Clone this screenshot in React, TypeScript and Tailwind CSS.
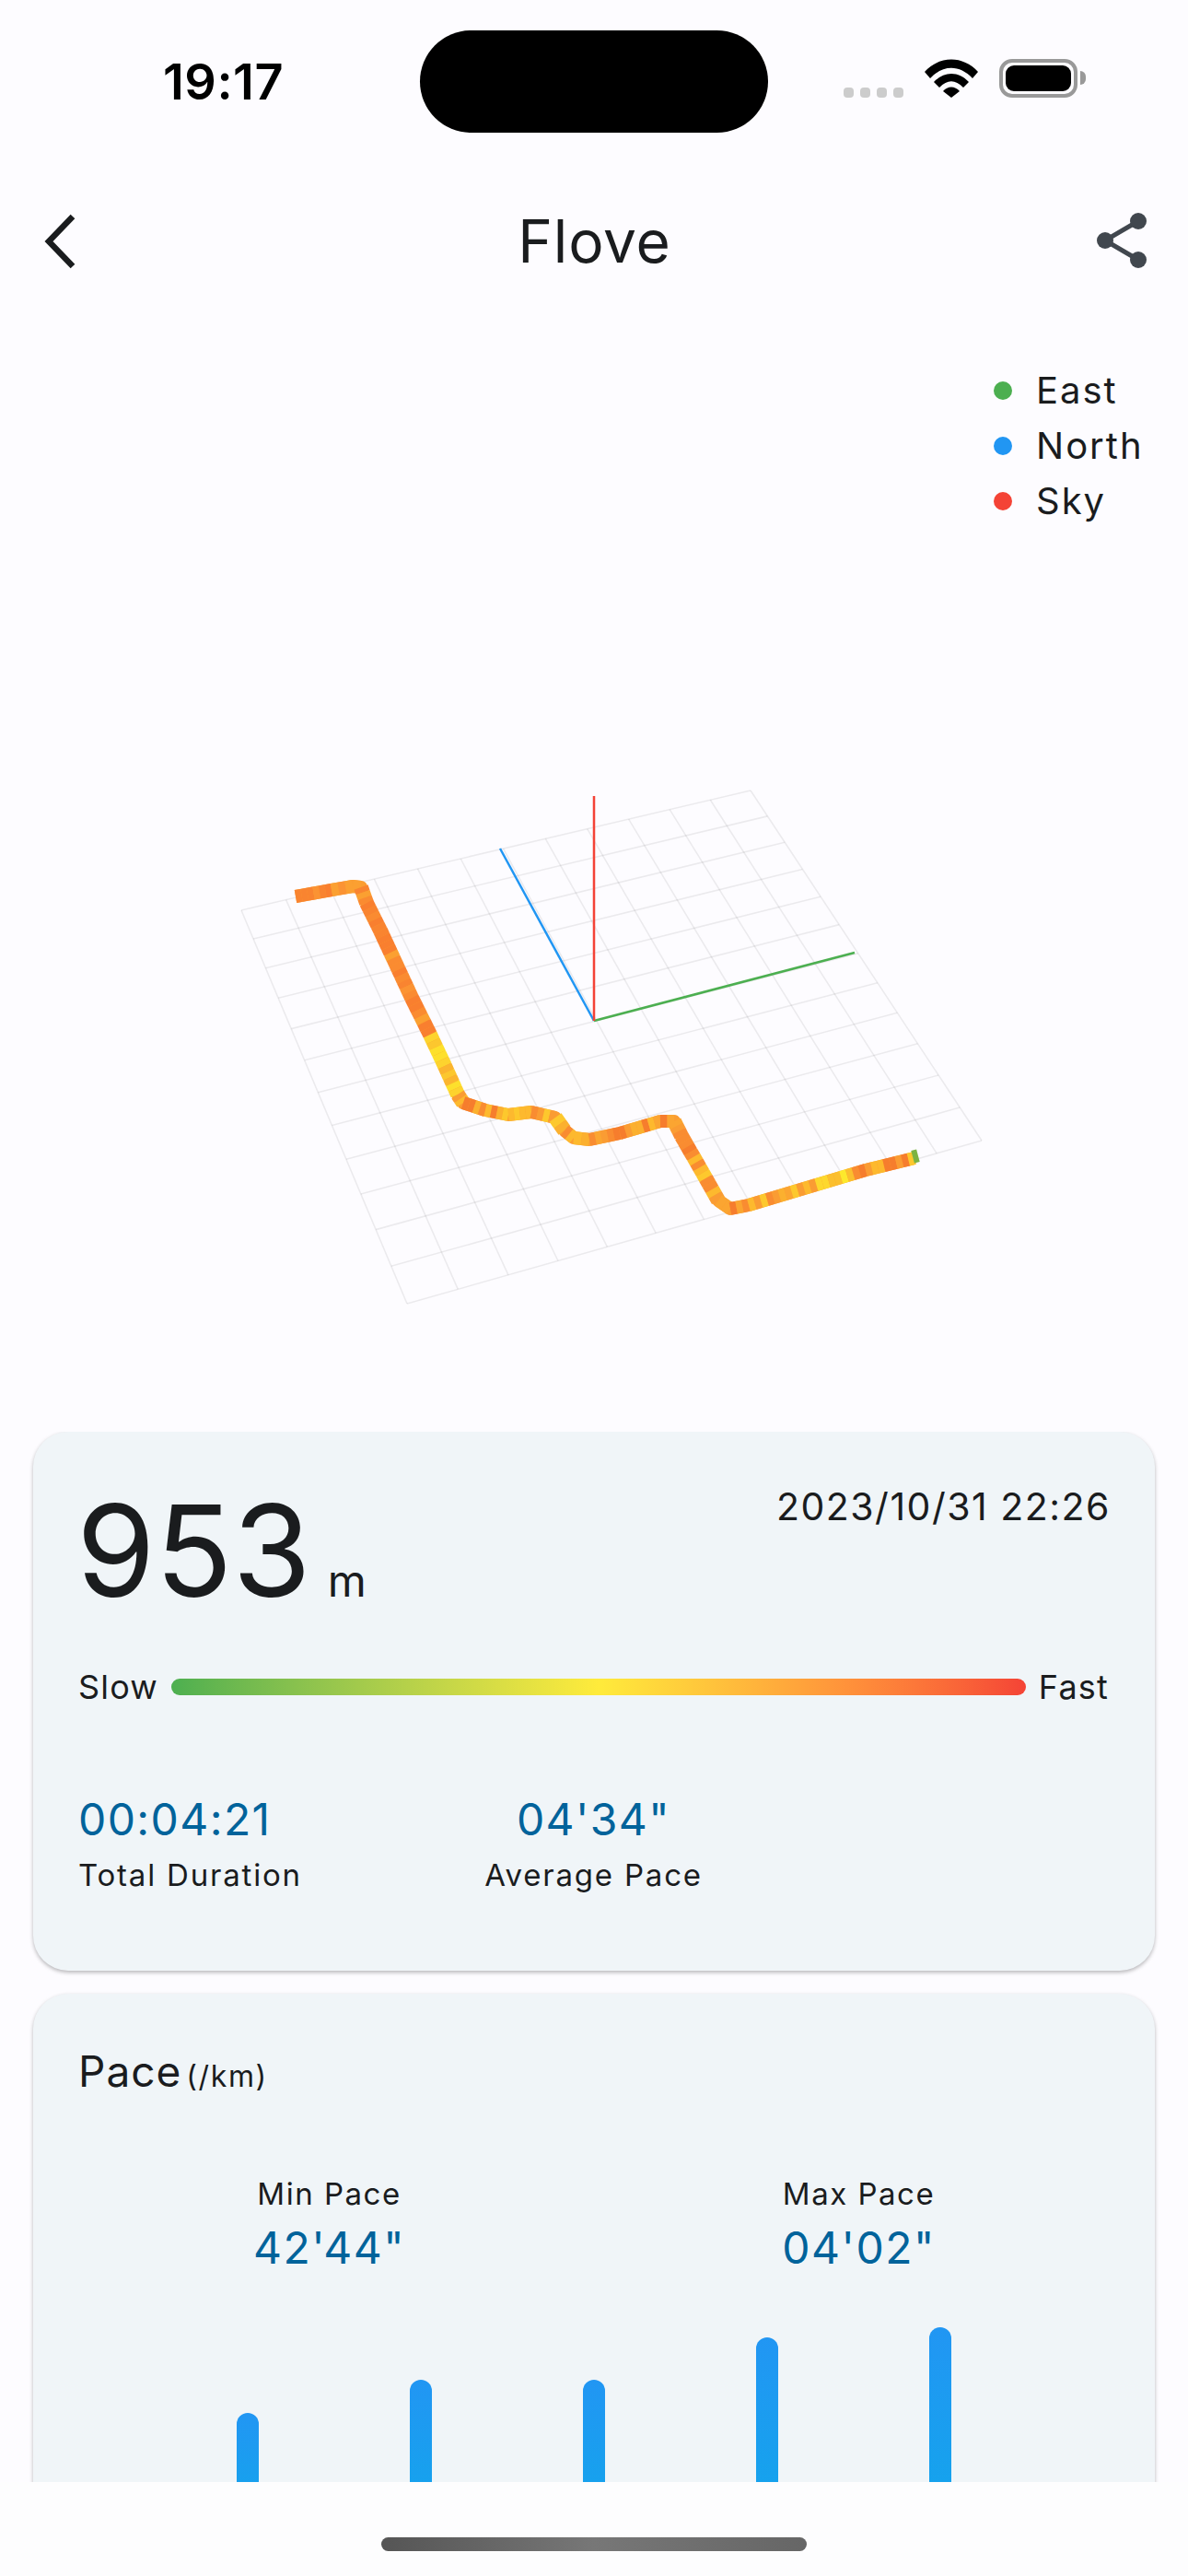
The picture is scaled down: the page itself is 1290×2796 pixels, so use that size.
import { Fragment } from 'react';

type Pt = [number, number];

// grid corners on the page, clockwise from the far left
const corners: Pt[] = [[262, 988], [815, 858], [1066, 1238], [442, 1415]];

function project(u: number, v: number): Pt {
  const [[x0, y0], [x1, y1], [x2, y2], [x3, y3]] = corners;
  const dx1 = x1 - x2, dx2 = x3 - x2, sx = x0 - x1 + x2 - x3;
  const dy1 = y1 - y2, dy2 = y3 - y2, sy = y0 - y1 + y2 - y3;
  const den = dx1 * dy2 - dx2 * dy1;
  const g = (sx * dy2 - dx2 * sy) / den;
  const h = (dx1 * sy - sx * dy1) / den;
  const a = x1 - x0 + g * x1, b = x3 - x0 + h * x3;
  const d = y1 - y0 + g * y1, e = y3 - y0 + h * y3;
  const w = g * u + h * v + 1;
  return [(a * u + b * v + x0) / w, (d * u + e * v + y0) / w];
}

const route: Pt[] = [
  [321, 973], [360, 966], [383, 962], [392, 963], [398, 980], [413, 1010], [427, 1040], [447, 1083],
  [467, 1123], [483, 1157], [497, 1188], [503, 1197], [527, 1205], [552, 1210], [577, 1207], [603, 1213],
  [613, 1227], [623, 1235], [640, 1237], [673, 1230], [717, 1217], [732, 1217], [740, 1233], [763, 1273],
  [780, 1303], [793, 1312], [813, 1308], [873, 1290], [940, 1270], [993, 1257],
];

function buildSegments() {
  const out: { a: Pt; b: Pt; color: string; width: number }[] = [];
  const orange = ['#f97f2f', '#fa8b31', '#f98430', '#fb9333', '#fba031'];
  const amber = ['#fba531', '#fbb02f', '#fa9c33', '#fdb92e', '#f98c31', '#f67d2d', '#fdc82d'];
  let seed = 17;
  const rnd = () => (seed = (seed * 1103 + 12345) % 65536) / 65536;
  route.slice(1).forEach((p, i) => {
    const q = route[i];
    const len = Math.hypot(p[0] - q[0], p[1] - q[1]);
    const steps = Math.max(1, Math.round(len / 7));
    const steep = Math.abs(p[1] - q[1]) > Math.abs(p[0] - q[0]);
    for (let s = 0; s < steps; s++) {
      const a: Pt = [q[0] + ((p[0] - q[0]) * s) / steps, q[1] + ((p[1] - q[1]) * s) / steps];
      const b: Pt = [q[0] + ((p[0] - q[0]) * (s + 1)) / steps, q[1] + ((p[1] - q[1]) * (s + 1)) / steps];
      let pal = i < 9 ? orange : amber;
      if (a[0] > 465 && a[0] < 497) pal = ['#fdd32e', '#fde02c', '#fcc72e', '#fbb52f'];
      if (a[0] > 880 && a[0] < 925) pal = ['#fde82c', '#fdd82d', '#fbbf2e'];
      out.push({ a, b, color: pal[Math.floor(rnd() * pal.length)], width: steep ? 16 : 14 });
    }
  });
  return out;
}

function GroundChart() {
  const lines = Array.from({ length: 13 }, (_, i) => i / 12);
  return (
    <svg viewBox="0 318 1290 1236" className="block w-full h-full">
      {lines.map((t) => {
        const [ax, ay] = project(t, 0);
        const [bx, by] = project(t, 1);
        const [cx, cy] = project(0, t);
        const [dx, dy] = project(1, t);
        return (
          <Fragment key={t}>
            <line x1={ax} y1={ay} x2={bx} y2={by} stroke="#000" strokeOpacity="0.07" strokeWidth="1.6" />
            <line x1={cx} y1={cy} x2={dx} y2={dy} stroke="#000" strokeOpacity="0.07" strokeWidth="1.6" />
          </Fragment>
        );
      })}
      <line x1="645" y1="1108" x2="543" y2="921" stroke="#2196f3" strokeWidth="2.5" />
      <line x1="645" y1="1108" x2="928" y2="1034" stroke="#4caf50" strokeWidth="2.5" />
      <line x1="645" y1="1108" x2="645" y2="864" stroke="#f44336" strokeWidth="2.5" />
      <polyline
        points={route.map((p) => p.join(',')).join(' ')}
        fill="none"
        stroke="#fb9d32"
        strokeWidth="14"
        strokeLinejoin="round"
      />
      {buildSegments().map((s, i) => (
        <line key={i} x1={s.a[0]} y1={s.a[1]} x2={s.b[0]} y2={s.b[1]} stroke={s.color} strokeWidth={s.width} />
      ))}
      <rect x="991" y="1248" width="6" height="14" fill="#7cb342" transform="rotate(-15 994 1255)" />
    </svg>
  );
}

function StatusIcons() {
  return (
    <div className="flex items-end gap-[23px] h-[42px] mt-[-8px]">
      <div className="flex gap-[7px] mb-0">
        {[0, 1, 2, 3].map((i) => (
          <div key={i} className="w-[11px] h-[11px] rounded-[4px] bg-[#cccccc]" />
        ))}
      </div>
      <svg width="58" height="42" viewBox="0 0 58 42">
        <path d="M0 14 C16 -4 42 -4 58 14 L52 21 C38 6 20 6 6 21 Z" fill="#000" />
        <path d="M10 25 C21 13 37 13 48 25 L42 31 C33 22 25 22 16 31 Z" fill="#000" />
        <path d="M20 35 C25 29 33 29 38 35 L29 42 Z" fill="#000" />
      </svg>
      <div className="flex items-center">
        <div className="w-[85px] h-[42px] rounded-[14px] border-[4px] border-[#999999] p-[3px]">
          <div className="w-full h-full rounded-[9px] bg-black" />
        </div>
        <div className="w-[6px] h-[15px] ml-[3px] rounded-r-full bg-[#999999]" />
      </div>
    </div>
  );
}

function Stat({ value, label, align }: { value: string; label: string; align: string }) {
  return (
    <div className={align}>
      <div className="text-[48px] leading-[56px] tracking-[1.4px] text-[#00639b]">{value}</div>
      <div className="mt-[10px] text-[33px] leading-[44px] tracking-[1.8px] text-[#1a1c1e]">{label}</div>
    </div>
  );
}

function PaceStat({ label, value }: { label: string; value: string }) {
  return (
    <div className="text-center">
      <div className="text-[33px] leading-[44px] tracking-[1.5px] text-[#1a1c1e]">{label}</div>
      <div className="mt-[9px] text-[48px] leading-[56px] tracking-[1.5px] text-[#00639b]">{value}</div>
    </div>
  );
}

const bars = ['h-[107px]', 'h-[143px]', 'h-[143px]', 'h-[189px]', 'h-[200px]'];

export default function App() {
  return (
    <div className="w-[1290px] h-[2796px] flex flex-col overflow-hidden bg-[#fdfcff] font-[family-name:Inter,sans-serif] text-[#1a1c1e]">
      <div className="flex h-[111px] mt-[33px] shrink-0 items-center">
        <div className="w-[456px] pl-[177px] text-[54px] leading-none font-semibold tracking-[0.5px] text-black">19:17</div>
        <div className="w-[378px] h-[111px] rounded-full bg-black" />
        <div className="pl-[82px]">
          <StatusIcons />
        </div>
      </div>

      <header className="flex h-[112px] mt-[62px] shrink-0 items-center justify-between px-[45px]">
        <svg width="56" height="64" viewBox="0 0 56 64" fill="none">
          <path d="M34 5 L8 32 L34 59" stroke="#1a1c1e" strokeWidth="6.5" />
        </svg>
        <div className="text-[64px] leading-none tracking-[0.8px]">Flove</div>
        <svg width="56" height="64" viewBox="1190 230 56 64" className="mr-[-1px]">
          <path d="M1236 240 L1200 261 L1236 282" fill="none" stroke="#41474e" strokeWidth="5" />
          <circle cx="1236" cy="240" r="9" fill="#41474e" />
          <circle cx="1200" cy="261" r="9" fill="#41474e" />
          <circle cx="1236" cy="282" r="9" fill="#41474e" />
        </svg>
      </header>

      <div className="relative h-[1236px] shrink-0">
        <GroundChart />
        <div className="absolute left-[1079px] top-[76px] flex flex-col">
          {[
            ['East', 'bg-[#4caf50]'],
            ['North', 'bg-[#2196f3]'],
            ['Sky', 'bg-[#f44336]'],
          ].map(([name, dot]) => (
            <div key={name} className="flex h-[60px] items-center gap-[26px] text-[40px] tracking-[2px]">
              <div className={`w-[20px] h-[20px] rounded-full ${dot}`} />
              {name}
            </div>
          ))}
        </div>
      </div>

      <main className="flex-1 min-h-0 overflow-hidden px-[36px]">
        <section className="h-[585px] rounded-[38px] bg-[#f0f5f8] pl-[49px] pr-[50px] pt-[60px] shadow-[0_2px_4px_rgba(0,0,0,0.28)]">
          <div className="flex items-start justify-between">
            <div className="flex items-baseline gap-[18px] ml-[-2px]">
              <span className="text-[138px] leading-[137px]">953</span>
              <span className="text-[48px] leading-none">m</span>
            </div>
            <div className="text-[41px] leading-[50px] tracking-[1.5px] mt-[-4px] mr-[-2px]">2023/10/31 22:26</div>
          </div>
          <div className="flex items-center gap-[14px] mt-[58px] text-[36px] leading-[44px] tracking-[1.2px]">
            <span>Slow</span>
            <div className="flex-1 h-[18px] rounded-full bg-linear-to-r from-[#4caf50] via-[#ffeb3b] to-[#f44336]" />
            <span>Fast</span>
          </div>
          <div className="grid grid-cols-3 mt-[94px]">
            <Stat value="00:04:21" label="Total Duration" align="text-left" />
            <Stat value="04'34&quot;" label="Average Pace" align="text-center" />
            <div />
          </div>
        </section>

        <section className="mt-[25px] h-[700px] rounded-[38px] bg-[#f0f5f8] px-[34px] pt-[59px] shadow-[0_2px_4px_rgba(0,0,0,0.28)]">
          <div className="pl-[15px] flex items-baseline gap-[5px]">
            <span className="text-[46px] leading-[50px] tracking-[1px]">Pace</span>
            <span className="text-[32px] leading-none tracking-[1.6px]">(/km)</span>
          </div>
          <div className="grid grid-cols-2 mt-[86px]">
            <PaceStat label="Min Pace" value="42'44&quot;" />
            <PaceStat label="Max Pace" value="04'02&quot;" />
          </div>
          <div className="flex h-[200px] items-end justify-center gap-[164px] mt-[58px]">
            {bars.map((h, i) => (
              <div key={i} className={`w-[24px] ${h} rounded-t-full bg-linear-to-b from-[#2196f3] to-[#13a4ec]`} />
            ))}
          </div>
        </section>
      </main>

      <footer className="flex h-[102px] shrink-0 justify-center bg-[#fdfdfe] pt-[60px]">
        <div className="w-[462px] h-[15px] rounded-full bg-linear-to-r from-[#555555] via-[#777777] to-[#666666]" />
      </footer>
    </div>
  );
}
